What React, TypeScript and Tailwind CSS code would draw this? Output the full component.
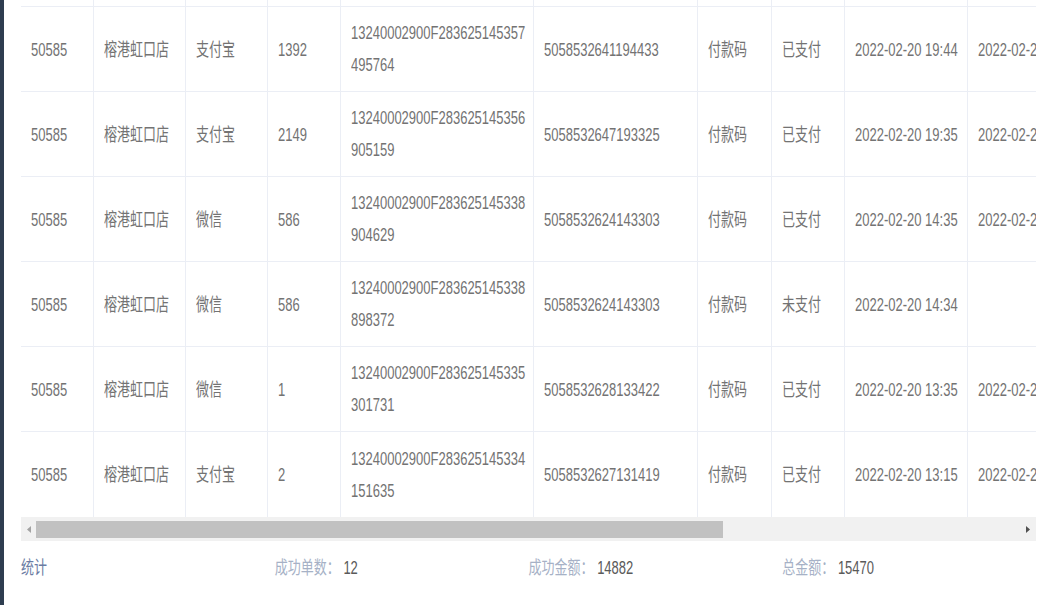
import React from 'react'

type Row = {
  shop: string
  store: string
  channel: string
  amount: string
  orderNo: [string, string]
  tradeNo: string
  method: string
  status: string
  createdAt: string
  paidAt: string
}

const rows: Row[] = [
  { shop: '50585', store: '榕港虹口店', channel: '支付宝', amount: '1392', orderNo: ['13240002900F283625145357', '495764'], tradeNo: '5058532641194433', method: '付款码', status: '已支付', createdAt: '2022-02-20 19:44', paidAt: '2022-02-20 19:44' },
  { shop: '50585', store: '榕港虹口店', channel: '支付宝', amount: '2149', orderNo: ['13240002900F283625145356', '905159'], tradeNo: '5058532647193325', method: '付款码', status: '已支付', createdAt: '2022-02-20 19:35', paidAt: '2022-02-20 19:35' },
  { shop: '50585', store: '榕港虹口店', channel: '微信', amount: '586', orderNo: ['13240002900F283625145338', '904629'], tradeNo: '5058532624143303', method: '付款码', status: '已支付', createdAt: '2022-02-20 14:35', paidAt: '2022-02-20 14:35' },
  { shop: '50585', store: '榕港虹口店', channel: '微信', amount: '586', orderNo: ['13240002900F283625145338', '898372'], tradeNo: '5058532624143303', method: '付款码', status: '未支付', createdAt: '2022-02-20 14:34', paidAt: '' },
  { shop: '50585', store: '榕港虹口店', channel: '微信', amount: '1', orderNo: ['13240002900F283625145335', '301731'], tradeNo: '5058532628133422', method: '付款码', status: '已支付', createdAt: '2022-02-20 13:35', paidAt: '2022-02-20 13:35' },
  { shop: '50585', store: '榕港虹口店', channel: '支付宝', amount: '2', orderNo: ['13240002900F283625145334', '151635'], tradeNo: '5058532627131419', method: '付款码', status: '已支付', createdAt: '2022-02-20 13:15', paidAt: '2022-02-20 13:15' },
]

// column widths incl. right border, last one runs past the clip
const widths = ['w-[73px]', 'w-[92px]', 'w-[82px]', 'w-[73px]', 'w-[193px]', 'w-[164px]', 'w-[74px]', 'w-[73px]', 'w-[123px]', 'w-[140px]']

function Cell({ w, children }: { w: string; children?: React.ReactNode }) {
  return (
    <div className={`${w} shrink-0 border-r border-[#ebeef5] flex items-center pl-[10px] overflow-hidden`}>
      <div className="scale-y-[1.4] leading-[23px] whitespace-nowrap">{children}</div>
    </div>
  )
}

function ScrollBar() {
  return (
    <div className="flex h-[24px] bg-[#f1f1f1] items-center">
      <div className="w-[15px] flex items-center justify-center">
        <svg width="4" height="7" viewBox="0 0 4 7">
          <path d="M4 0 L0 3.5 L4 7 Z" fill="#a3a3a3" />
        </svg>
      </div>
      <div className="w-[687px] h-[17px] bg-[#c1c1c1]" />
      <div className="flex-1" />
      <div className="w-[17px] flex items-center justify-center">
        <svg width="4" height="7" viewBox="0 0 4 7">
          <path d="M0 0 L4 3.5 L0 7 Z" fill="#505050" />
        </svg>
      </div>
    </div>
  )
}

function Stat({ label, value }: { label: string; value: string }) {
  return (
    <div className="scale-y-[1.4] origin-left">
      <span className="text-[#a6b1c6]">{label}</span>
      <span className="text-[#5a5a5a]">&nbsp;{value}</span>
    </div>
  )
}

export default function App() {
  return (
    <div className="flex h-[605px] w-full bg-white text-[13px] text-[#737373] font-['Liberation_Sans','Noto_Sans_CJK_SC',sans-serif] overflow-hidden">
      <div className="w-[4px] shrink-0 bg-[#2e3d50]" />
      <div className="flex-1 min-w-0 pl-[17px] pr-[7px]">
        <div className="overflow-hidden">
          <div className="w-[1100px]">
            <div className="flex h-[7px] border-b border-[#ebeef5]">
              {widths.map((w, i) => (
                <div key={i} className={`${w} shrink-0 border-r border-[#ebeef5]`} />
              ))}
            </div>
            {rows.map((r, i) => (
              <div key={i} className="flex h-[85px] border-b border-[#ebeef5] last:border-b-0">
                <Cell w={widths[0]}>{r.shop}</Cell>
                <Cell w={widths[1]}>{r.store}</Cell>
                <Cell w={widths[2]}>{r.channel}</Cell>
                <Cell w={widths[3]}>{r.amount}</Cell>
                <Cell w={widths[4]}>
                  {r.orderNo[0]}
                  <br />
                  {r.orderNo[1]}
                </Cell>
                <Cell w={widths[5]}>{r.tradeNo}</Cell>
                <Cell w={widths[6]}>{r.method}</Cell>
                <Cell w={widths[7]}>{r.status}</Cell>
                <Cell w={widths[8]}>{r.createdAt}</Cell>
                <Cell w={widths[9]}>{r.paidAt}</Cell>
              </div>
            ))}
          </div>
        </div>
        <ScrollBar />
        <div className="grid grid-cols-4 mt-[15px] leading-[23px]">
          <div className="scale-y-[1.4] origin-left text-[#6a7ca3]">统计</div>
          <Stat label="成功单数：" value="12" />
          <Stat label="成功金额：" value="14882" />
          <Stat label="总金额：" value="15470" />
        </div>
      </div>
    </div>
  )
}
